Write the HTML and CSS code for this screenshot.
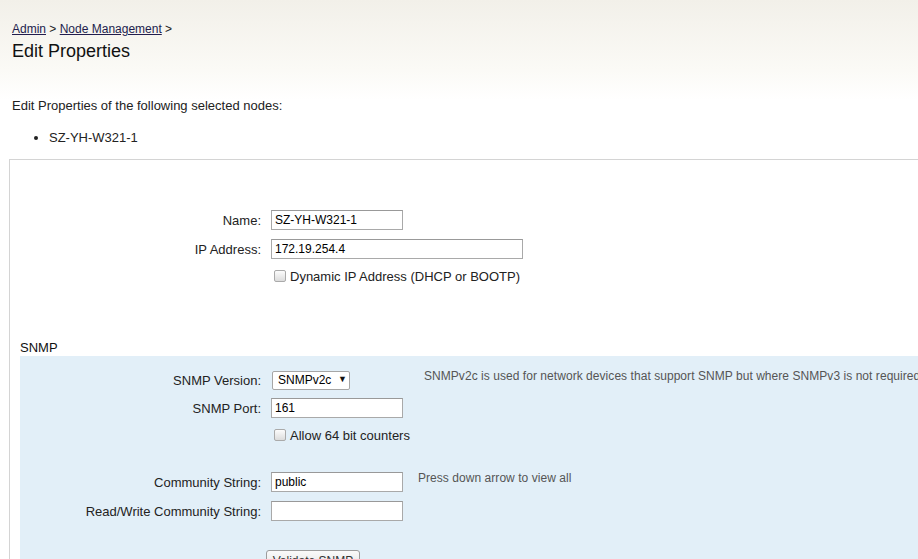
FILE: index.html
```html
<!DOCTYPE html>
<html>
<head>
<meta charset="utf-8">
<title>Edit Properties</title>
<link rel="stylesheet" href="styles.css">
</head>
<body>
<div class="page">
  <div class="crumbs"><a href="#">Admin</a> &gt; <a href="#">Node Management</a> &gt;</div>
  <h1 class="title">Edit Properties</h1>
  <p class="intro">Edit Properties of the following selected nodes:</p>
  <ul class="nodes"><li>SZ-YH-W321-1</li></ul>

  <div class="box">
    <div class="general">
      <div class="row">
        <label class="lbl">Name:</label>
        <div class="field"><input class="txt" type="text" value="SZ-YH-W321-1"></div>
      </div>
      <div class="row r9">
        <label class="lbl">IP Address:</label>
        <div class="field wide"><input class="txt txt-wide" type="text" value="172.19.254.4"></div>
      </div>
      <div class="row r7">
        <span class="lbl"></span>
        <label class="check wide"><input type="checkbox" class="cb"> Dynamic IP Address (DHCP or BOOTP)</label>
      </div>
    </div>

    <div class="section-title">SNMP</div>
    <div class="snmp">
      <div class="row">
        <label class="lbl">SNMP Version:</label>
        <div class="field">
          <div class="sel"><select><option>SNMPv2c</option></select></div>
        </div>
        <div class="help help-version">SNMPv2c is used for network devices that support SNMP but where SNMPv3 is not required for security.</div>
      </div>
      <div class="row r8">
        <label class="lbl">SNMP Port:</label>
        <div class="field"><input class="txt" type="text" value="161"></div>
      </div>
      <div class="row r7">
        <span class="lbl"></span>
        <label class="check wide"><input type="checkbox" class="cb"> Allow 64 bit counters</label>
      </div>
      <div class="row r27">
        <label class="lbl">Community String:</label>
        <div class="field"><input class="txt" type="text" value="public"></div>
        <div class="help">Press down arrow to view all</div>
      </div>
      <div class="row r9">
        <label class="lbl">Read/Write Community String:</label>
        <div class="field"><input class="txt" type="text" value=""></div>
      </div>
      <div class="row r29">
        <span class="lbl"></span>
        <div class="field"><button class="btn" type="button">Validate SNMP</button></div>
      </div>
    </div>
  </div>
</div>
</body>
</html>
```

FILE: styles.css
```css
html, body {
  margin: 0;
  padding: 0;
  overflow: hidden;
  height: 559px;
}
body {
  font-family: "Liberation Sans", Arial, sans-serif;
  font-size: 13px;
  color: #222;
  background: #fff;
}
.page {
  background: linear-gradient(to bottom, #f2f0e9 0, #fbfaf6 70px, #ffffff 100px) no-repeat;
  background-size: 100% 100px;
  padding: 21px 0 0 9px;
  min-height: 559px;
  box-sizing: border-box;
}
.crumbs {
  padding-left: 3px;
  line-height: 16px;
  font-size: 12px;
  color: #222;
}
.crumbs a {
  color: #221d4d;
  text-decoration: underline;
}
.title {
  margin: 3px 0 0;
  padding-left: 3px;
  font-size: 18px;
  line-height: 22px;
  font-weight: normal;
  color: #111;
}
.intro {
  margin: 36px 0 0;
  padding-left: 3px;
  line-height: 16px;
}
.nodes {
  margin: 16px 0 13px;
  padding-left: 40px;
  line-height: 16px;
}
.box {
  border-top: 1px solid #d4d4d4;
  border-left: 1px solid #d4d4d4;
  margin-right: -40px;
  padding-left: 10px;
  min-height: 420px;
}
.general {
  padding-top: 50px;
}
.row {
  display: grid;
  grid-template-columns: 241px 137px 1fr;
  column-gap: 10px;
  align-items: center;
  min-height: 20px;
}
.r7 { margin-top: 7px; }
.r8 { margin-top: 8px; }
.r9 { margin-top: 9px; }
.r27 { margin-top: 27px; }
.r29 { margin-top: 29px; }
.lbl {
  text-align: right;
  color: #222;
  white-space: nowrap;
}
.field {
  display: flex;
  align-items: center;
}
.wide {
  grid-column: 2 / 4;
}
.txt {
  box-sizing: border-box;
  width: 132px;
  height: 20px;
  border: 1px solid #a9a9a9;
  border-top-color: #999;
  padding: 0 3px;
  font-family: "Liberation Sans", Arial, sans-serif;
  font-size: 12px;
  color: #000;
  background: #fff;
  outline: none;
}
.txt-wide {
  width: 252px;
}
.check {
  display: flex;
  align-items: center;
  gap: 4px;
  padding-left: 3px;
  color: #222;
}
.cb {
  appearance: none;
  -webkit-appearance: none;
  margin: 0;
  width: 12px;
  height: 12px;
  border: 1px solid #aaa;
  border-radius: 2px;
  background: linear-gradient(to bottom, #fcfcfc, #dcdcdc);
  box-sizing: border-box;
}
.section-title {
  margin-top: 54px;
  line-height: 16px;
  color: #111;
}
.snmp {
  background: #e2eff8;
  padding-top: 14px;
  min-height: 220px;
}
.sel {
  position: relative;
  margin-left: 1px;
}
.sel select {
  appearance: none;
  -webkit-appearance: none;
  box-sizing: border-box;
  width: 78px;
  height: 19px;
  border: 1px solid #a6a6a6;
  border-radius: 2px;
  background: #fff;
  padding: 0 0 0 5px;
  font-family: "Liberation Sans", Arial, sans-serif;
  font-size: 12px;
  color: #000;
}
.sel::after {
  content: "\25BC";
  position: absolute;
  left: 66px;
  top: 3px;
  font-size: 9px;
  color: #111;
  pointer-events: none;
}
.help {
  align-self: start;
  line-height: 16px;
  font-size: 12px;
  letter-spacing: 0.05px;
  color: #555;
  white-space: nowrap;
  margin-top: -2px;
}
.help-version {
  margin-left: 6px;
  margin-top: -2px;
}
.btn {
  margin-left: -5px;
  width: 94px;
  height: 22px;
  border: 1px solid #9c9c9c;
  border-radius: 3px;
  background: linear-gradient(to bottom, #fafafa, #dedede);
  font-family: "Liberation Sans", Arial, sans-serif;
  font-size: 12px;
  color: #333;
  padding: 0;
}
```
